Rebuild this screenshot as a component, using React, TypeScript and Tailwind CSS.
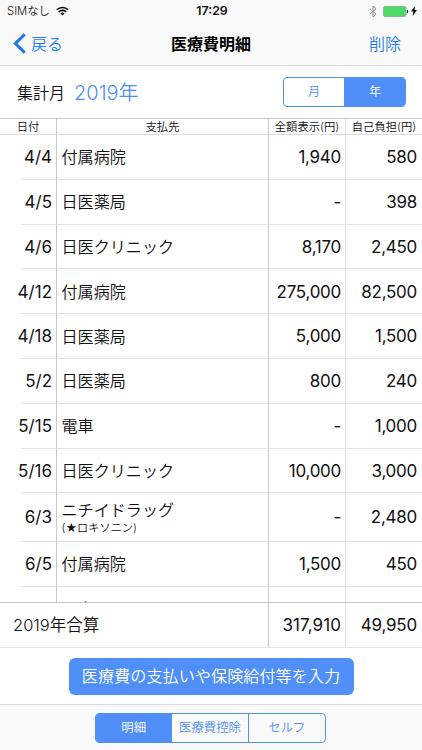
import React, { useState } from 'react';
import { clsx } from 'clsx';

interface Expense {
  date: string;
  payee: string;
  note?: string;
  total: string;
  self: string;
}

const EXPENSES: Expense[] = [
  { date: '4/4', payee: '付属病院', total: '1,940', self: '580' },
  { date: '4/5', payee: '日医薬局', total: '-', self: '398' },
  { date: '4/6', payee: '日医クリニック', total: '8,170', self: '2,450' },
  { date: '4/12', payee: '付属病院', total: '275,000', self: '82,500' },
  { date: '4/18', payee: '日医薬局', total: '5,000', self: '1,500' },
  { date: '5/2', payee: '日医薬局', total: '800', self: '240' },
  { date: '5/15', payee: '電車', total: '-', self: '1,000' },
  { date: '5/16', payee: '日医クリニック', total: '10,000', self: '3,000' },
  { date: '6/3', payee: 'ニチイドラッグ', note: '(★ロキソニン)', total: '-', self: '2,480' },
  { date: '6/5', payee: '付属病院', total: '1,500', self: '450' },
  { date: '', payee: '電車', total: '', self: '' },
];

interface SegmentProps {
  items: string[];
  value: string;
  onChange: (v: string) => void;
  className: string;
  itemClassName: string;
}

const Segment: React.FC<SegmentProps> = ({ items, value, onChange, className, itemClassName }) => (
  <div className={clsx('flex overflow-hidden rounded-[4px] border border-[#4f8ff7] divide-x divide-[#4f8ff7] font-[350]', className)}>
    {items.map((item) => (
      <button
        key={item}
        onClick={() => onChange(item)}
        className={clsx(
          'whitespace-nowrap pt-px text-center',
          itemClassName,
          item === value ? 'bg-[#4f8ff7] text-white' : 'text-[#4f8ff7]'
        )}
      >
        {item}
      </button>
    ))}
  </div>
);

const StatusBar: React.FC = () => (
  <div className="flex h-[22px] items-center text-[12px]">
    <div className="flex flex-1 items-center gap-[6px] pl-[7px]">
      <span className="text-[11.3px] font-[350]">SIMなし</span>
      <svg width="13" height="10" viewBox="0 0 14 10" fill="none" stroke="#000" strokeWidth="1.7">
        <path d="M.8 3.7a8.8 8.8 0 0 1 12.4 0" />
        <path d="M3 6a5.7 5.7 0 0 1 8 0" />
        <path d="M7 9.9 4.8 7.7a3.1 3.1 0 0 1 4.4 0Z" fill="#000" stroke="none" />
      </svg>
    </div>
    <span className="text-[12.3px] font-semibold">17:29</span>
    <div className="flex flex-1 items-center justify-end pr-[5px]">
      <svg width="8" height="13" viewBox="0 0 8 13" fill="none" stroke="#8e8e93" strokeWidth="1">
        <path d="M.8 3.6 7 9.2 4 12V1l3 2.8L.8 9.4" />
      </svg>
      <svg className="ml-[6px]" width="26" height="11" viewBox="0 0 26 11">
        <rect x=".5" y=".5" width="22.5" height="10" rx="1.6" fill="#4cd964" stroke="#86a98c" strokeWidth=".8" />
        <path d="M24 3.6c1.7.5 1.7 3.3 0 3.8Z" fill="#222" />
      </svg>
      <svg className="ml-[2px]" width="6" height="10" viewBox="0 0 6 10">
        <path d="M4 0 0 5.6h2.5L1.6 10 6 4.1H3.4Z" fill="#000" />
      </svg>
    </div>
  </div>
);

const ExpenseRow: React.FC<{ item: Expense }> = ({ item }) => (
  <div className={clsx('flex shrink-0 text-[17px] tracking-[-0.27px]', item.note ? 'h-[48.6px]' : 'h-[44.8px]')}>
    <div className="w-[21px]" />
    <div className="flex w-[36px] items-center justify-end border-b border-r border-b-[#e4e4e6] border-r-[#c8c8cc] pr-[4px] pt-[2px] tracking-normal">
      {item.date}
    </div>
    <div className="flex w-[212px] flex-col justify-center border-b border-r border-b-[#e4e4e6] border-r-[#c8c8cc] pl-[4.5px] pt-[2px] font-[350] tracking-normal">
      <span className="text-[16.1px] leading-[19px]">{item.payee}</span>
      {item.note && <span className="text-[11.2px] leading-[16px]">{item.note}</span>}
    </div>
    <div className="flex w-[77px] items-center justify-end border-b border-r border-[#e4e4e6] pr-[4px] pt-[2px]">
      {item.total}
    </div>
    <div className="flex flex-1 items-center justify-end border-b border-[#e4e4e6] pr-[5px] pt-[2px]">
      {item.self}
    </div>
  </div>
);

const App: React.FC = () => {
  const [period, setPeriod] = useState('年');
  const [tab, setTab] = useState('明細');

  return (
    <div className="flex h-[750px] w-[422px] flex-col overflow-hidden bg-white font-['Inter','Noto_Sans_CJK_JP',sans-serif] text-[#111]">
      {/* Navigation */}
      <header className="h-[66px] shrink-0 border-b border-[#dcdcde] bg-[#f9f9f9]">
        <StatusBar />
        <div className="flex h-[43px] items-center text-[16px]">
          <button className="flex w-[171px] items-center gap-[5px] pl-[13px] font-[350] text-[#1f80f5]">
            <svg width="13" height="21" viewBox="0 0 13 21" fill="none" stroke="#1878f3" strokeWidth="3">
              <path d="M11.8 1.2 2.4 10.5l9.4 9.3" />
            </svg>
            戻る
          </button>
          <h1 className="font-bold text-black">医療費明細</h1>
          <button className="flex-1 pr-[21px] text-right font-[350] text-[#1f80f5]">削除</button>
        </div>
      </header>

      {/* Period */}
      <div className="flex h-[52px] shrink-0 items-center pl-[17px] pr-[16px]">
        <span className="pt-px text-[16px] font-[350]">集計月</span>
        <span className="ml-[9px] flex-1 pt-px text-[20px] font-[350] text-[#4f8ff7]">2019年</span>
        <Segment
          items={['月', '年']}
          value={period}
          onChange={setPeriod}
          className="h-[30px] w-[123px] text-[12.2px]"
          itemClassName="flex-1"
        />
      </div>

      {/* Column titles */}
      <div className="flex h-[17px] shrink-0 border-y border-[#c8c8cc] border-b-[#dcdcde] text-center text-[11.3px] font-[350] leading-[16px]">
        <div className="w-[57px] border-r border-[#c8c8cc]">日付</div>
        <div className="w-[212px] border-r border-[#c8c8cc]">支払先</div>
        <div className="w-[77px] border-r border-[#e4e4e6]">全額表示(円)</div>
        <div className="flex-1">自己負担(円)</div>
      </div>

      <div className="flex h-[467px] shrink-0 flex-col overflow-hidden">
        {EXPENSES.map((item, i) => (
          <ExpenseRow key={i} item={item} />
        ))}
      </div>

      {/* Total */}
      <div className="flex h-[46px] shrink-0 border-y border-t-[#c8c8cc] border-b-[#e4e4e6] text-[17px]">
        <div className="flex w-[269px] items-center border-r border-[#c8c8cc] pl-[13px] text-[16.5px] font-[350]">2019年合算</div>
        <div className="flex w-[77px] items-center justify-end border-r border-[#e4e4e6] pr-[4px] pt-[2px] tracking-[0.1px]">317,910</div>
        <div className="flex flex-1 items-center justify-end pr-[5px] pt-[2px] tracking-[-0.2px]">49,950</div>
      </div>

      <div className="flex h-[56px] shrink-0 items-center justify-center">
        <button className="h-[37px] w-[285px] rounded-[6px] bg-[#4f8ff7] pt-px text-[16.15px] font-[350] text-white">
          医療費の支払いや保険給付等を入力
        </button>
      </div>

      {/* Toolbar */}
      <footer className="flex flex-1 border-t border-[#dcdcde] bg-[#f9f9f9] pl-[95px] pt-[8px]">
        <Segment
          items={['明細', '医療費控除', 'セルフ']}
          value={tab}
          onChange={setTab}
          className="h-[30px] w-[231px] text-[12.4px]"
          itemClassName="w-[77px]"
        />
      </footer>
    </div>
  );
};

export default App;
